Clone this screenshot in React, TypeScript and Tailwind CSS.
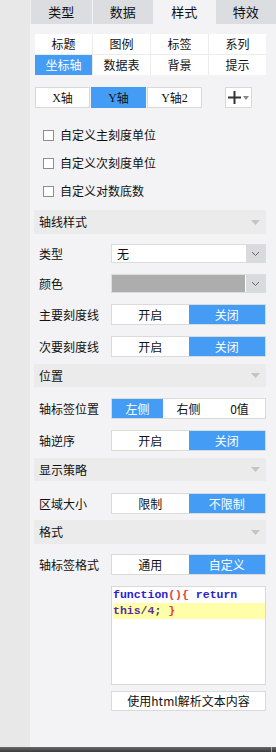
import React from 'react';

const font = { fontFamily: '"Noto Sans CJK SC", "Noto Sans", sans-serif' };

function Caret() {
    return (
        <svg width="9" height="5" viewBox="0 0 9 5" className="shrink-0">
            <path d="M0 0 L9 0 L4.5 5 Z" fill="#c4c4c4" />
        </svg>
    );
}

function Chevron() {
    return (
        <svg width="9" height="6" viewBox="0 0 9 6">
            <path d="M1 1 L4.5 4.5 L8 1" stroke="#666" strokeWidth="1" fill="none" />
        </svg>
    );
}

function Section({ title }: { title: string }) {
    return (
        <div className="flex items-center justify-between bg-[#ebebeb] pl-[5px] pr-[6px] h-full">
            <span className="text-[12px] text-[#111]">{title}</span>
            <Caret />
        </div>
    );
}

function Toggle({ items, active }: { items: string[]; active: number }) {
    return (
        <div className="flex h-full w-[155px] border border-[#dadada] bg-white">
            {items.map((it, i) => (
                <div
                    key={it}
                    className={
                        'flex-1 flex items-center justify-center text-[12px] ' +
                        (i === active ? 'bg-[#459cf5] text-white' : 'text-[#111]')
                    }
                >
                    {it}
                </div>
            ))}
        </div>
    );
}

function Row({ label, children, h, mt }: { label: string; children: React.ReactNode; h: string; mt: string }) {
    return (
        <div className={'flex items-center ' + h + ' ' + mt}>
            <span className="w-[77px] pl-[5px] text-[12px] text-[#111]">{label}</span>
            {children}
        </div>
    );
}

export default function App() {
    const subTabs = ['标题', '图例', '标签', '系列', '坐标轴', '数据表', '背景', '提示'];

    return (
        <div className="w-[276px] h-[752px] flex flex-col overflow-hidden" style={font}>
            <div className="flex flex-1 min-h-0">
                <div className="w-[30px] bg-[#e8e8e8] shrink-0" />
                <div className="flex-1 bg-[#f3f3f5] flex flex-col">
                    {/* top tabs */}
                    <div className="grid grid-cols-4 gap-px pl-px h-[24px]">
                        {['类型', '数据', '样式', '特效'].map((t, i) => (
                            <div
                                key={t}
                                className={
                                    'flex items-center justify-center text-[13px] text-[#111] ' +
                                    (i === 2 ? 'bg-[#f3f3f5]' : 'bg-[#dcdde1]')
                                }
                            >
                                {t}
                            </div>
                        ))}
                    </div>

                    <div className="flex flex-col pl-[4px] pr-[10px]">
                        {/* sub tabs */}
                        <div className="mt-[10px] ml-px grid grid-cols-4 gap-px bg-[#ececec] h-[41px]">
                            {subTabs.map((t, i) => (
                                <div
                                    key={t}
                                    className={
                                        'flex items-center justify-center text-[12px] ' +
                                        (i === 4 ? 'bg-[#459cf5] text-white' : 'bg-white text-[#111]')
                                    }
                                >
                                    {t}
                                </div>
                            ))}
                        </div>

                        {/* axis buttons */}
                        <div className="mt-[12px] ml-px flex items-center h-[21px]">
                            {['X轴', 'Y轴', 'Y轴2'].map((t, i) => (
                                <div
                                    key={t}
                                    className={
                                        'w-[55px] h-full mr-px flex items-center justify-center text-[12px] border ' +
                                        (i === 1 ? 'bg-[#459cf5] border-[#459cf5] text-[#111]' : 'bg-white border-[#d8d8d8] text-[#111]')
                                    }
                                >
                                    <span style={{ fontFamily: '"Liberation Serif", serif' }}>{t.slice(0, 1)}</span>
                                    <span>轴</span>
                                    {t.length > 2 && <span style={{ fontFamily: '"Liberation Serif", serif' }}>2</span>}
                                </div>
                            ))}
                            <div className="ml-[22px] w-[27px] h-full bg-white border border-[#d8d8d8] flex items-center justify-center gap-[2px]">
                                <svg width="13" height="13" viewBox="0 0 13 13">
                                    <path d="M6.5 0 V13 M0 6.5 H13" stroke="#333" strokeWidth="2" />
                                </svg>
                                <svg width="6" height="4" viewBox="0 0 6 4">
                                    <path d="M0 0 H6 L3 4 Z" fill="#888" />
                                </svg>
                            </div>
                        </div>

                        {/* checkboxes */}
                        <div className="mt-[13px] flex flex-col">
                            {['自定义主刻度单位', '自定义次刻度单位', '自定义对数底数'].map((t) => (
                                <div key={t} className="h-[28px] flex items-center pl-[9px]">
                                    <div className="w-[11px] h-[11px] border border-[#8d8d8d] bg-white mr-[6px]" />
                                    <span className="text-[12px] text-[#111]">{t}</span>
                                </div>
                            ))}
                        </div>

                        <div className="mt-[5px] h-[24px]">
                            <Section title="轴线样式" />
                        </div>

                        <Row label="类型" h="h-[19px]" mt="mt-[10px]">
                            <div className="flex h-full w-[155px] border border-[#dcdcdc] bg-white">
                                <div className="flex-1 flex items-center pl-[5px] text-[12px] text-[#111]">无</div>
                                <div className="w-[19px] bg-[#d9dadd] flex items-center justify-center">
                                    <Chevron />
                                </div>
                            </div>
                        </Row>

                        <Row label="颜色" h="h-[19px]" mt="mt-[11px]">
                            <div className="flex h-full w-[155px] border border-[#dcdcdc] bg-white">
                                <div className="flex-1 bg-[#adadad]" />
                                <div className="w-[20px] bg-[#d9dadd] border-l border-white flex items-center justify-center">
                                    <Chevron />
                                </div>
                            </div>
                        </Row>

                        <Row label="主要刻度线" h="h-[21px]" mt="mt-[11px]">
                            <Toggle items={['开启', '关闭']} active={1} />
                        </Row>
                        <Row label="次要刻度线" h="h-[21px]" mt="mt-[11px]">
                            <Toggle items={['开启', '关闭']} active={1} />
                        </Row>

                        <div className="mt-[7px] h-[23px]">
                            <Section title="位置" />
                        </div>

                        <Row label="轴标签位置" h="h-[21px]" mt="mt-[11px]">
                            <Toggle items={['左侧', '右侧', '0值']} active={0} />
                        </Row>
                        <Row label="轴逆序" h="h-[21px]" mt="mt-[11px]">
                            <Toggle items={['开启', '关闭']} active={1} />
                        </Row>

                        <div className="mt-[7px] h-[23px]">
                            <Section title="显示策略" />
                        </div>

                        <Row label="区域大小" h="h-[21px]" mt="mt-[12px]">
                            <Toggle items={['限制', '不限制']} active={1} />
                        </Row>

                        <div className="mt-[6px] h-[24px]">
                            <Section title="格式" />
                        </div>

                        <Row label="轴标签格式" h="h-[21px]" mt="mt-[10px]">
                            <Toggle items={['通用', '自定义']} active={1} />
                        </Row>

                        {/* code editor */}
                        <div className="mt-[11px] ml-[77px] w-[155px] h-[99px] bg-white border border-[#d8d8d8] flex flex-col">
                            <div
                                className="text-[11.5px] font-bold leading-[16px] pl-px"
                                style={{ fontFamily: '"Liberation Mono", monospace' }}
                            >
                                <div>
                                    <span className="text-[#2a22d0]">function</span>
                                    <span className="text-[#e8403a]">(){'{'}</span>
                                    <span> </span>
                                    <span className="text-[#2a22d0]">return</span>
                                </div>
                                <div className="bg-[#ffffaa]">
                                    <span className="text-[#5a2ca0]">this</span>
                                    <span className="text-[#555]">/</span>
                                    <span className="text-[#5a2ca0]">4</span>
                                    <span className="text-[#333]">; </span>
                                    <span className="text-[#e8403a]">{'}'}</span>
                                </div>
                            </div>
                        </div>

                        <div className="mt-[6px] ml-[77px] w-[155px] h-[20px] bg-white border border-[#dadada] flex items-center justify-center text-[12px] text-[#111]">
                            使用html解析文本内容
                        </div>
                    </div>
                </div>
            </div>
            <div className="h-[5px] bg-gradient-to-b from-[#6a6a6a] to-[#3c3c3c] relative shrink-0">
                <div className="absolute left-[271px] top-0 w-px h-full bg-[#aaa]" />
            </div>
        </div>
    );
}
